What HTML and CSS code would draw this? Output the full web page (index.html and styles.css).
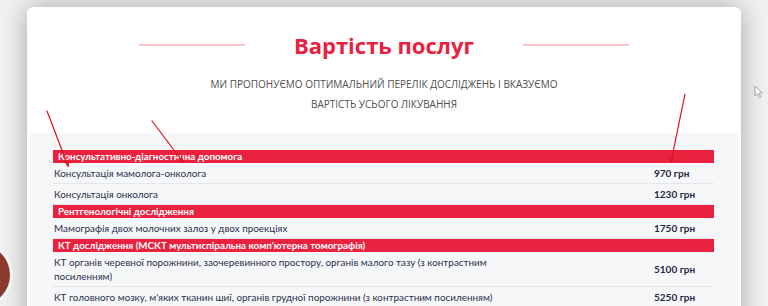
FILE: index.html
```html
<!DOCTYPE html>
<html lang="uk">
<head>
<meta charset="utf-8">
<title>Вартість послуг</title>
<link rel="stylesheet" href="styles.css">
</head>
<body>
<div class="card">
  <div class="head">
    <div class="title-row">
      <span class="rule"></span>
      <h1 class="title">Вартість послуг</h1>
      <span class="rule"></span>
    </div>
    <p class="subtitle">МИ ПРОПОНУЄМО ОПТИМАЛЬНИЙ ПЕРЕЛІК ДОСЛІДЖЕНЬ І ВКАЗУЄМО<br>ВАРТІСТЬ УСЬОГО ЛІКУВАННЯ</p>
  </div>
  <div class="prices">
    <div class="table">
      <div class="group">Консультативно-діагностична допомога</div>
      <div class="row"><div class="name">Консультація мамолога-онколога</div><div class="price">970 грн</div></div>
      <div class="row"><div class="name">Консультація онколога</div><div class="price">1230 грн</div></div>
      <div class="group">Рентгенологічні дослідження</div>
      <div class="row"><div class="name">Мамографія двох молочних залоз у двох проекціях</div><div class="price">1750 грн</div></div>
      <div class="group">КТ дослідження (МСКТ мультиспіральна комп'ютерна томографія)</div>
      <div class="row"><div class="name">КТ органів черевної порожнини, заочеревинного простору, органів малого тазу (з контрастним посиленням)</div><div class="price">5100 грн</div></div>
      <div class="row"><div class="name">КТ головного мозку, м'яких тканин шиї, органів грудної порожнини (з контрастним посиленням)</div><div class="price">5250 грн</div></div>
    </div>
  </div>
</div>

<div class="chat-bubble"></div>

<svg class="cursor" width="10" height="14" viewBox="0 0 10 14" aria-hidden="true">
  <path d="M1 1 L1 11 L3.5 8.6 L5.4 12.6 L6.9 11.9 L5.1 8 L8.4 8 Z" fill="#fff" stroke="#9a9a9a" stroke-width="0.9" stroke-linejoin="round"/>
</svg>

<svg class="annot" width="768" height="306" viewBox="0 0 768 306" aria-hidden="true">
  <g stroke="#e0101c" stroke-width="1.2" fill="none" stroke-linecap="round">
    <line x1="47" y1="111" x2="68" y2="166"/>
    <polyline points="64.5,161 68,166 69,159.8"/>
    <line x1="152" y1="121" x2="183" y2="162"/>
    <polyline points="178,159.6 183,162 181.6,156.6"/>
    <line x1="685" y1="94" x2="671" y2="162"/>
    <polyline points="668.4,156.5 671,162 673.9,156.8"/>
  </g>
</svg>
</body>
</html>
```

FILE: styles.css
```css
html, body {
  margin: 0;
  padding: 0;
  overflow: hidden;
}
body {
  background: #f1f1f1;
  font-family: "Open Sans", "Liberation Sans", sans-serif;
  height: 306px;
  position: relative;
}
.card {
  margin: 7px 0 0 27px;
  width: 714px;
  height: 400px;
  background: #fff;
  border-radius: 6px 6px 0 0;
  box-shadow: 0 0 26px rgba(0, 0, 0, 0.32);
  padding: 0 3px;
  box-sizing: border-box;
}
.head {
  padding-top: 24px;
  height: 126px;
  box-sizing: border-box;
}
.title-row {
  display: flex;
  align-items: center;
  justify-content: center;
  gap: 49px;
}
.rule {
  width: 106px;
  height: 2px;
  background: #fbc3c7;
}
.title {
  margin: 0;
  font-family: "Open Sans", sans-serif;
  font-weight: 700;
  font-size: 22px;
  line-height: 28px;
  color: #e9203f;
}
.subtitle {
  margin: 15px 0 0;
  text-align: center;
  font-family: "Open Sans", sans-serif;
  font-size: 10px;
  line-height: 20px;
  color: #4f4f4f;
}
.prices {
  background: #f6f7f9;
  padding: 17px 24px 0 23px;
  height: 300px;
}
.table {
  display: flex;
  flex-direction: column;
}
.group {
  background: #eb2140;
  color: #fff;
  font-family: "Lato", sans-serif;
  font-weight: 700;
  font-size: 9.8px;
  line-height: 13px;
  height: 13px;
  padding-left: 5px;
}
.row {
  display: grid;
  grid-template-columns: 601px 1fr;
  align-items: center;
  border-bottom: 1px solid #e4e6ea;
}
.row:last-child {
  border-bottom: none;
}
.name {
  padding: 3px 115px 3px 1px;
  font-family: "Lato", sans-serif;
  font-size: 9.9px;
  line-height: 14px;
  color: #27314a;
}
.price {
  font-family: "Lato", sans-serif;
  font-size: 10px;
  font-weight: 700;
  line-height: 14px;
  color: #1e2842;
}
.chat-bubble {
  position: absolute;
  left: -44px;
  top: 246px;
  width: 54px;
  height: 58px;
  border-radius: 50%;
  background: #8a3a2c;
  box-shadow: 0 0 0 3px rgba(255, 255, 255, 0.45);
}
.cursor {
  position: absolute;
  left: 754px;
  top: 85px;
}
.annot {
  position: absolute;
  left: 0;
  top: 0;
  pointer-events: none;
}
```
